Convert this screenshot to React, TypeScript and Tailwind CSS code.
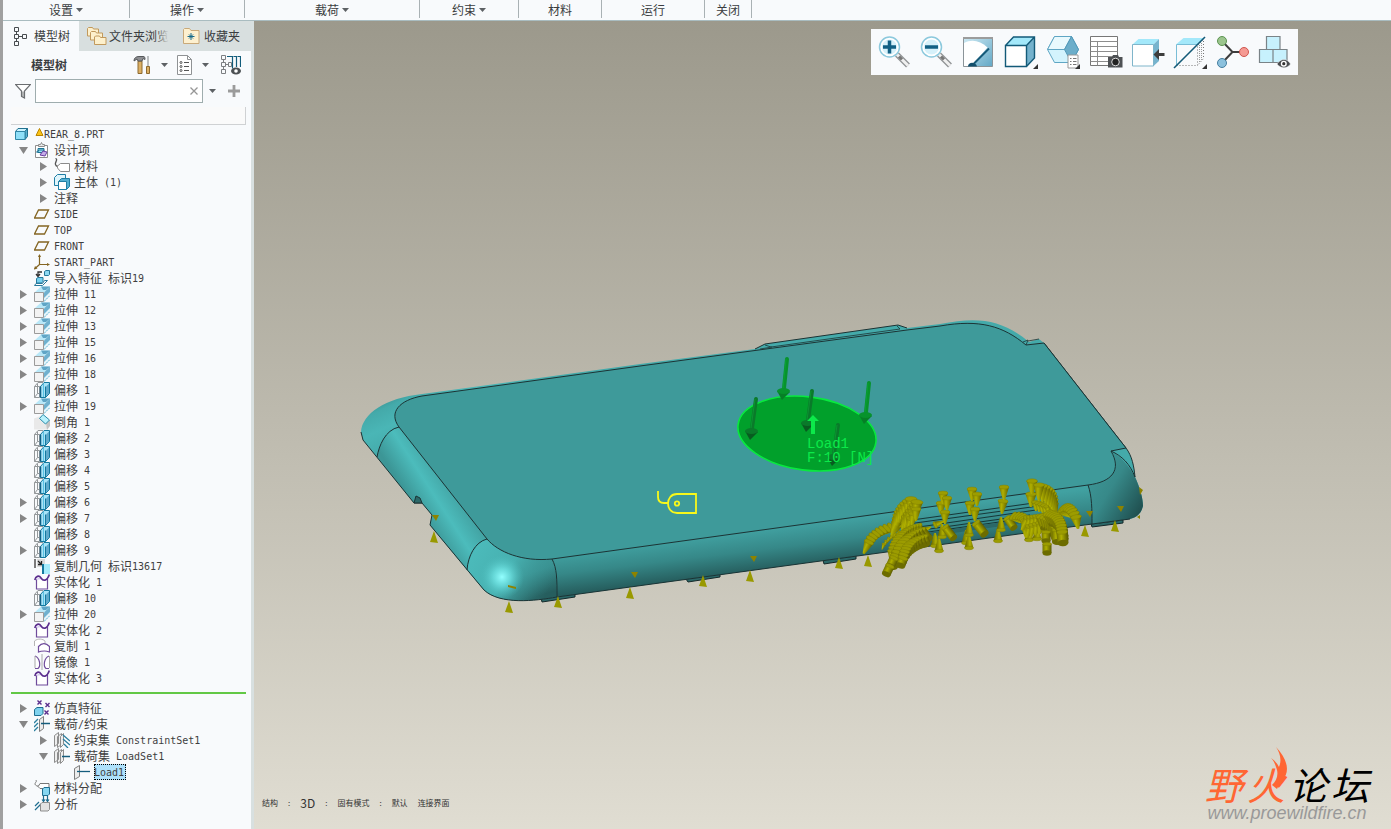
import * as React from 'react';

interface IMenuItem {
  name: string;
  width: string;
  dropdown?: boolean;
}

interface ITreeNode {
  name: string;
  level: number;
  icon?: keyof typeof icons;
  state?: 'open' | 'closed';
  selected?: boolean;
}

const menu: IMenuItem[] = [
  { name: '设置', width: 'w-[127px]', dropdown: true },
  { name: '操作', width: 'w-[115px]', dropdown: true },
  { name: '载荷', width: 'w-[175px]', dropdown: true },
  { name: '约束', width: 'w-[99px]', dropdown: true },
  { name: '材料', width: 'w-[83px]' },
  { name: '运行', width: 'w-[103px]' },
  { name: '关闭', width: 'w-[47px]' },
];

const OffsetIcon = () => (
  <>
    <path d="M.5 4.500h5v11h-5zM.5 4.500l3.500-4h5M3.500 1.500v10h3M.5 15.500l3-4" fill="none" stroke="#94989a" />
    <path d="M6.500 4.500 10 .5h5.500v11l-4 4h-5z" fill="#a9e4f7" stroke="#14799f" />
    <path d="M12 4.500l3-3v10l-3 3z" fill="#5fa9cb" />
    <path d="M6.500 4.500v11" stroke="#0e5f85" strokeWidth="1.500" />
    <path d="M9.500 2v13" stroke="#58bfe3" />
    <path d="M11.500 4.500v11" stroke="#14799f" />
  </>
);

const ExtrudeIcon = () => (
  <>
    <path d="M.5 6.500 7 .5h9l-6 6z" fill="#b9e8f8" />
    <path d="M10 6.500 16 .5v9l-6 6z" fill="#6fb1cf" />
    <path d="M7 .5h9L12 4H9z" fill="#5fa5c6" />
    <path d="M10 15.500V12l6-6v3.500z" fill="#e3f5fb" />
    <path d="M10 15.500l6-6" stroke="#6bbdd8" strokeDasharray="2 1" />
    <path d="M.5 6.500h9v9h-9z" fill="#f3f3f3" stroke="#9b9b9b" />
  </>
);

const DatumIcon = () => <path d="M4.500 4h10l-4 8h-10z" fill="none" stroke="#846522" strokeWidth="1.300" />;

const SolidifyIcon = () => (
  <>
    <path d="M2.500 5v10h11V5" fill="#fff" stroke="#6f4b9b" strokeWidth="1.200" />
    <path d="M2 6c3-4 5-2 6 0s5 1 6-5v4H8z" fill="#d9cfee" />
    <path d="M.8 6C1.500 2 5 1 7 4s6 4 8.300-3.500" fill="none" stroke="#5b2d8d" strokeWidth="1.700" />
  </>
);

const TagIcon = () => (
  <>
    <path d="M1.500.5c3 1-1 4 0 6 .5 1.500 2 2 3.500 1.500" fill="none" stroke="#555" strokeWidth="1.300" />
    <path d="M6.500 5.500h9v8h-9L3.500 10V8z" fill="#fff" stroke="#8b8b8b" />
  </>
);

const PlateIcon = () => <path d="M5.500 3.500 9.500.5v12l-4 3z" fill="#ececec" stroke="#7d7d7d" />;

const icons = {
  part: () => (
    <>
      <path d="M1.500 5.500 4 2.500h9.500L11 5.500z" fill="#c9f3ff" stroke="#22718f" />
      <path d="M11 5.500l2.500-3v8l-2.500 3z" fill="#57b0d1" stroke="#22718f" />
      <path d="M1.500 5.500H11v8H1.500z" fill="#8fdff8" stroke="#2f86a6" />
    </>
  ),
  design: () => (
    <>
      <path d="M1.500 3.500h12v12h-12z" fill="#fff" stroke="#8d8d8d" />
      <path d="M4.500 4.500v-2h2l1-2 1 2h2v2z" fill="#e9e9e9" stroke="#8d8d8d" />
      <path d="M4 6.500h6v4H4zM2.500 10 5 8h5l-2 3z" fill="#9ce1f7" stroke="#1c7393" />
      <path d="M6 13l3-4 4 1-2 4z" fill="#c6aee9" stroke="#6b40a3" />
    </>
  ),
  tag: TagIcon,
  body: () => (
    <>
      <path d="M.5 3.500 3.500.5h8v8l-3 3h-8z" fill="#dff5fc" stroke="#1f7ea5" />
      <path d="M4.500 7.500 7.500 4.500h8v8l-3 3h-8z" fill="#52afd1" stroke="#1f7ea5" />
      <path d="M4.500 7.500h8v8h-8z" fill="#fff" stroke="#1f7ea5" />
    </>
  ),
  datum: DatumIcon,
  csys: () => (
    <>
      <path d="M5.500 10.500V1M5.500 10.500H15M5.500 10.500l-5 4.500" fill="none" stroke="#846522" strokeWidth="1.200" />
      <path d="M5.500 0 4 3h3zM16 10.500l-3-1.500v3zM0 15.500l1-3.500L3.500 14.500z" fill="#846522" />
    </>
  ),
  imported: () => (
    <>
      <path d="M4 5V2h4M2 4l2 2.500L6 4" fill="none" stroke="#333" strokeWidth="1.300" />
      <path d="M10.500 1.500 12 .5h3.500v4l-1 1h-4z" fill="#8fd9f2" stroke="#28789b" />
      <path d="M.5 15.500h8l5-5h-3l-2 3H2z" fill="#fff" stroke="#28789b" />
      <path d="M2.500 8.500 4 7.500h5v4l-1.500 1.500h-5z" fill="#75cfee" stroke="#28789b" />
    </>
  ),
  extrude: ExtrudeIcon,
  offset: OffsetIcon,
  chamfer: () => (
    <>
      <path d="M0 4.500l5-2h5l6 5-3 8H0z" fill="#e9e9e9" />
      <path d="M12 9l4-3v6l-3 4z" fill="#c4c4c4" />
      <path d="M5.500 4.500 9 .5l6.500 5.500-4 4z" fill="#b9f2fd" stroke="#2b8cab" />
    </>
  ),
  copyGeometry: () => (
    <>
      <path d="M3 1h8v8H3z" fill="#dadada" />
      <path d="M1 1v9" stroke="#7b7b7b" strokeWidth="2" />
      <path d="M4 3l3 3M7.500 3v3.500H4" fill="none" stroke="#222" strokeWidth="1.300" />
      <path d="M9 6h7v10H9z" fill="#a6ecfc" />
      <path d="M8 6h2v10H8z" fill="#14799f" />
    </>
  ),
  solidify: SolidifyIcon,
  copy: () => (
    <>
      <path d="M.5 8V3C4 0 9 1 11 3v3" fill="#fff" stroke="#b5b5b5" />
      <path d="M4.500 8.500C8 4.500 12 5 15.500 8.500v5.500c-3-1-3-1-5-1s-4 0-6 1z" fill="#fff" stroke="#6f4b9b" strokeWidth="1.200" />
    </>
  ),
  mirror: () => (
    <>
      <path d="M1 2c5 2 6 10 3 12.500H1" fill="#fff" stroke="#6f4b9b" strokeWidth="1.200" />
      <path d="M15 2c-5 2-6 10-3 12.500h3" fill="#fff" stroke="#6f4b9b" strokeWidth="1.200" />
      <path d="M8 0v16M1 2v12M15.500 2v12" stroke="#a9a9a9" />
    </>
  ),
  simulation: () => (
    <>
      <path d="M.5 9.500 3 7.500h6v6l-2 2H.5z" fill="#7fd2ee" stroke="#1f6e90" />
      <path d="M3.500.5l4 4M7.500.5l-4 4M11.500 3l4 4M15.500 3l-4 4M10.500 10.500l4 4M14.500 10.500l-4 4" stroke="#5b2d8d" strokeWidth="1.400" />
    </>
  ),
  loads: () => (
    <>
      <path d="M0 7l4-4M0 11l4-4M0 15l4-4" stroke="#2b7f9f" strokeWidth="1.300" />
      <PlateIcon />
      <path d="M7 7.500h9" stroke="#155d7d" strokeWidth="1.500" />
    </>
  ),
  constraintSet: () => (
    <>
      <path d="M.5 3.500 4.500.5v11l-4 3zM3.500 4.500 7.500 1.500v11l-4 3z" fill="#eee" stroke="#8d8d8d" />
      <path d="M6.500 4.500l3-3v11l-3 3z" fill="#eee" stroke="#8d8d8d" />
      <path d="M9 3l7 6M9 7l7 6M10 12l4 4" stroke="#2b7f9f" strokeWidth="1.300" />
    </>
  ),
  loadSet: () => (
    <>
      <path d="M.5 3.500 4.500.5v11l-4 3zM3.500 4.500 7.500 1.500v11l-4 3z" fill="#eee" stroke="#8d8d8d" />
      <path d="M6.500 4.500l3-3v11l-3 3z" fill="#eee" stroke="#8d8d8d" />
      <path d="M8 8.500h8" stroke="#155d7d" strokeWidth="1.500" />
    </>
  ),
  load: () => (
    <>
      <path d="M.5 4.500 5.500 1.500v11l-5 3z" fill="#ececec" stroke="#7d7d7d" />
      <path d="M3 7.500h13" stroke="#155d7d" strokeWidth="1.300" />
    </>
  ),
  assign: () => (
    <>
      <path d="M1.500 0c3 1-2 3 0 5 1 1 2 1 3 1L6 3.500h9v5H6L3.500 6" fill="#fff" stroke="#777" />
      <path d="M8.500 9l1.500-1.500h5.500v6.500L14 15.500H8.500z" fill="#86d6f1" stroke="#1f6e90" />
    </>
  ),
  analysis: () => (
    <>
      <path d="M1 10l4-4M1 14l6-6M9.500 0v5M13.500 0v5M8 3.500l1.500 2 1.500-2M12 3.500l1.500 2 1.500-2" fill="none" stroke="#1f6e90" strokeWidth="1.200" />
      <path d="M6.500 8 8 6.500h7.500v7L14 15H6.500z" fill="#e2e2e2" stroke="#8d8d8d" />
    </>
  ),
};

const features: ITreeNode[] = [
  { name: '设计项', level: 1, icon: 'design', state: 'open' },
  { name: '材料', level: 2, icon: 'tag', state: 'closed' },
  { name: '主体 (1)', level: 2, icon: 'body', state: 'closed' },
  { name: '注释', level: 2, state: 'closed' },
  { name: 'SIDE', level: 1, icon: 'datum' },
  { name: 'TOP', level: 1, icon: 'datum' },
  { name: 'FRONT', level: 1, icon: 'datum' },
  { name: 'START_PART', level: 1, icon: 'csys' },
  { name: '导入特征 标识19', level: 1, icon: 'imported' },
  { name: '拉伸 11', level: 1, icon: 'extrude', state: 'closed' },
  { name: '拉伸 12', level: 1, icon: 'extrude', state: 'closed' },
  { name: '拉伸 13', level: 1, icon: 'extrude', state: 'closed' },
  { name: '拉伸 15', level: 1, icon: 'extrude', state: 'closed' },
  { name: '拉伸 16', level: 1, icon: 'extrude', state: 'closed' },
  { name: '拉伸 18', level: 1, icon: 'extrude', state: 'closed' },
  { name: '偏移 1', level: 1, icon: 'offset' },
  { name: '拉伸 19', level: 1, icon: 'extrude', state: 'closed' },
  { name: '倒角 1', level: 1, icon: 'chamfer' },
  { name: '偏移 2', level: 1, icon: 'offset' },
  { name: '偏移 3', level: 1, icon: 'offset' },
  { name: '偏移 4', level: 1, icon: 'offset' },
  { name: '偏移 5', level: 1, icon: 'offset' },
  { name: '偏移 6', level: 1, icon: 'offset', state: 'closed' },
  { name: '偏移 7', level: 1, icon: 'offset', state: 'closed' },
  { name: '偏移 8', level: 1, icon: 'offset' },
  { name: '偏移 9', level: 1, icon: 'offset', state: 'closed' },
  { name: '复制几何 标识13617', level: 1, icon: 'copyGeometry' },
  { name: '实体化 1', level: 1, icon: 'solidify' },
  { name: '偏移 10', level: 1, icon: 'offset' },
  { name: '拉伸 20', level: 1, icon: 'extrude', state: 'closed' },
  { name: '实体化 2', level: 1, icon: 'solidify' },
  { name: '复制 1', level: 1, icon: 'copy' },
  { name: '镜像 1', level: 1, icon: 'mirror' },
  { name: '实体化 3', level: 1, icon: 'solidify' },
];

const simulation: ITreeNode[] = [
  { name: '仿真特征', level: 1, icon: 'simulation', state: 'closed' },
  { name: '载荷/约束', level: 1, icon: 'loads', state: 'open' },
  { name: '约束集 ConstraintSet1', level: 2, icon: 'constraintSet', state: 'closed' },
  { name: '载荷集 LoadSet1', level: 2, icon: 'loadSet', state: 'open' },
  { name: 'Load1', level: 3, icon: 'load', selected: true },
  { name: '材料分配', level: 1, icon: 'assign', state: 'closed' },
  { name: '分析', level: 1, icon: 'analysis', state: 'closed' },
];

const indent: Record<number, string> = { 1: 'pl-0', 2: 'pl-5', 3: 'pl-10' };

const Caret = () => (
  <svg viewBox="0 0 7 4" className="h-1 w-[7px] shrink-0" aria-hidden="true">
    <path d="M0 0h7L3.500 4z" fill="#5d6164" />
  </svg>
);

// Latin runs are set in half-width cells, next to the full-width Chinese ones
const Label: React.FunctionComponent<{ text: string }> = ({ text }) => (
  <>
    {text.split(/([\x20-\x7e]+)/).filter(Boolean).map((run, idx) => (
      <span key={idx} className={/^[\x20-\x7e]/.test(run) ? `pt-0.5 font-['DejaVu_Sans_Mono',monospace] text-[10px]/[14px]` : `text-xs/4`}>
        {run}
      </span>
    ))}
  </>
);

const TreeRow: React.FunctionComponent<{ node: ITreeNode }> = ({ node }) => {
  const Icon = node.icon ? icons[node.icon] : undefined;

  return (
    <li className={`flex h-4 items-center ${indent[node.level]}`}>
      {node.state ? (
        <button type="button" title={node.name} className="flex h-4 w-5 shrink-0 items-center justify-center pr-0.5">
          <svg viewBox="0 0 9 9" className="h-[9px] w-[9px]" aria-hidden="true">
            <path d={node.state === 'open' ? 'M0 1h9L4.500 8z' : 'M1 0v9l7-4.500z'} fill="#868686" />
          </svg>
        </button>
      ) : (
        <span className="w-5 shrink-0" />
      )}
      {Icon && (
        <svg viewBox="0 0 16 16" className="mr-1 h-4 w-4 shrink-0" aria-hidden="true">
          <Icon />
        </svg>
      )}
      <span className={`flex h-4 items-center whitespace-pre ${node.selected ? `bg-[#aee1fb] pr-0.5 outline-1 -outline-offset-1 outline-dotted outline-black` : ``}`}>
        <Label text={node.name} />
      </span>
    </li>
  );
};

const Sidebar = () => (
  <aside className="w-[251px] shrink-0 border-r-[3px] border-[#d8e0e0] bg-[#f8fafc]" aria-label="模型树">
    <div className="flex h-[30px] bg-[#d8dfdf]" role="tablist">
      <button type="button" role="tab" aria-selected="true" className="flex w-[76px] items-center gap-1.5 bg-[#f8fafc] pl-2.5">
        <svg viewBox="0 0 15 20" className="h-5 w-[15px] shrink-0" fill="none" stroke="#474b4e" aria-hidden="true">
          <path d="M1.500 1.500h4v4h-4zM1.500 8.500h4v4h-4zM1.500 15.500h4v4h-4zM9.500 8.500h4v4h-4zM3.500 5.500v3M3.500 12.500v3M5.500 10.500h4" />
        </svg>
        <span className="whitespace-nowrap">模型树</span>
      </button>
      <button type="button" role="tab" aria-selected="false" className="relative flex w-[93px] items-center gap-0.5 pl-2">
        <svg viewBox="0 0 20 20" className="h-5 w-5 shrink-0" fill="#fdf0cc" stroke="#c1995c" aria-hidden="true">
          <path d="M.5 10V2.500l1-1h4l1 1.500h5v7z" />
          <path d="M3.500 14V6.500l1-1h4l1 1.500h6v7z" />
          <path d="M7.500 18.500V11l1-1h4l1 1.500h5.500v7z" />
        </svg>
        <span className="whitespace-nowrap">文件夹浏览</span>
        <span className="absolute inset-y-0 right-0 w-4 bg-linear-to-r from-transparent to-[#d8dfdf] to-80%" />
      </button>
      <button type="button" role="tab" aria-selected="false" className="flex items-center gap-1 pl-2.5">
        <svg viewBox="0 0 18 18" className="h-[18px] w-[18px] shrink-0" aria-hidden="true">
          <path d="M1.500 16.500v-14l1-1h5l1.500 2h8v13z" fill="#fdf0cf" stroke="#c9a979" />
          <path d="M9 6v7M5.500 9.500h7M7 7.500l4 4M11 7.500l-4 4" stroke="#14698b" />
        </svg>
        <span className="whitespace-nowrap">收藏夹</span>
      </button>
    </div>

    <div className="flex h-7 items-center pl-7 pr-2.5">
      <h2 className="flex-1 font-bold">模型树</h2>
      <button type="button" title="工具" className="flex items-center gap-2">
        <svg viewBox="0 0 20 20" className="h-5 w-5" aria-hidden="true">
          <path d="M5 6h4v12.500H5z" fill="#dcb065" stroke="#8d6a30" />
          <path d="M1 6c0-3 2-4.500 5-4.500h4c2 0 2 1 2 3l-2-1-1 2.500H5L4 4z" fill="#8e8f92" stroke="#55575a" />
          <path d="M15 1v10" stroke="#a9abae" strokeWidth="1.500" />
          <path d="M13.500 11.500h3v7h-3z" fill="#dcb065" stroke="#8d6a30" />
        </svg>
        <Caret />
      </button>
      <button type="button" title="显示" className="ml-2 flex items-center gap-2">
        <svg viewBox="0 0 18 20" className="h-5 w-[18px]" fill="none" stroke="#8f9294" aria-hidden="true">
          <path d="M1.500.5h10l4 4v15h-14z" fill="#fff" />
          <path d="M11.500.5v4h4" />
          <circle cx="5" cy="7.500" r="1" stroke="#555" />
          <circle cx="5" cy="11.500" r="1" stroke="#555" />
          <circle cx="5" cy="15.500" r="1" stroke="#555" />
          <path d="M8 7.500h5M8 11.500h5M8 15.500h5" stroke="#555" />
        </svg>
        <Caret />
      </button>
      <button type="button" title="树列" className="ml-3">
        <svg viewBox="0 0 20 20" className="h-5 w-5" fill="none" aria-hidden="true">
          <path d="M.5.5h4v4h-4zM.5 7.500h4v4h-4zM.5 14.500h4v4h-4zM2.500 4.500v3M2.500 11.500v3M4.500 9.500h3M7.500 7.500h3v4h-3z" stroke="#7c7f82" />
          <path d="M6 1.500h5.500v12M12.500 1.500h3V12M16.500 1.500h3V12" stroke="#125c7b" strokeWidth="1.200" />
          <ellipse cx="15" cy="16" rx="5" ry="3.500" fill="#4c5053" />
          <circle cx="15" cy="16" r="1.800" fill="#fff" />
        </svg>
      </button>
    </div>

    <div className="flex h-6 items-center pl-3 pr-2">
      <label htmlFor="tree-filter" title="过滤" className="mr-1 shrink-0">
        <svg viewBox="0 0 16 16" className="h-4 w-4" aria-hidden="true">
          <path d="M.5 1.500h15L9.500 8v7l-3-1.500V8z" fill="#fff" stroke="#6b6e71" strokeWidth="1.200" />
          <path d="M8 8.500V14" stroke="#6b6e71" />
        </svg>
      </label>
      <span className="relative flex-1">
        <input id="tree-filter" type="text" aria-label="过滤" className="block h-6 w-full border border-[#9fadae] bg-white pl-1 pr-5 outline-none" />
        <button type="button" title="清除" className="absolute inset-y-0 right-1 flex items-center">
          <svg viewBox="0 0 10 10" className="h-2.5 w-2.5" aria-hidden="true">
            <path d="M1.500 1.500l7 7M8.500 1.500l-7 7" stroke="#969696" strokeWidth="1.300" />
          </svg>
        </button>
      </span>
      <button type="button" title="过滤选项" className="ml-1.5">
        <Caret />
      </button>
      <button type="button" title="添加" className="ml-3">
        <svg viewBox="0 0 12 12" className="h-3 w-3" aria-hidden="true">
          <path d="M6 0v12M0 6h12" stroke="#9b9b9b" strokeWidth="2.800" />
        </svg>
      </button>
      <span className="w-[3px]" />
    </div>

    <div className="ml-2 mr-[5px] mt-1 h-[18px] border-b border-r border-[#cfd1d3] bg-[#fafafa]" />

    <ul className="pl-[11px] pt-px text-[#3f3f3f]">
      <li className="flex h-4 items-center">
        <svg viewBox="0 0 16 16" className="mr-1 h-4 w-4 shrink-0" aria-hidden="true">
          {icons.part()}
        </svg>
        <svg viewBox="0 0 10 16" className="h-4 w-2.5 shrink-0" aria-hidden="true">
          <path d="M5.500 2.500 9 9.500H2z" fill="#fbc316" stroke="#b98500" />
        </svg>
        <Label text="REAR_8.PRT" />
      </li>
      {features.map((node) => (
        <TreeRow key={node.name} node={node} />
      ))}
    </ul>
    <div className="my-1.5 ml-2 mr-[5px] h-0.5 bg-[#62c845]" />
    <ul className="pb-4 pl-[11px] text-[#3f3f3f]">
      {simulation.map((node) => (
        <TreeRow key={node.name} node={node} />
      ))}
    </ul>
  </aside>
);

const Corner = () => <path d="M34 29v5h-5z" fill="#333" />;

const Magnifier: React.FunctionComponent<React.PropsWithChildren> = ({ children }) => (
  <>
    <path d="M19 19.500l11 11" stroke="#8f9294" strokeWidth="5.500" />
    <path d="M19 19.500l11 11" stroke="#f0f0f0" strokeWidth="3" />
    <path d="M21 21.500l3 3" stroke="#777" strokeWidth="3" />
    <circle cx="11.500" cy="12" r="10" fill="#fff" stroke="#8cc9dd" strokeWidth="1.500" />
    <circle cx="11.500" cy="12" r="7.500" fill="#d6f1fa" />
    <g stroke="#126084" strokeWidth="3.500">{children}</g>
  </>
);

const tools = [
  { title: '放大', icon: <Magnifier><path d="M5 12h13M11.500 5.500v13" /></Magnifier> },
  { title: '缩小', icon: <Magnifier><path d="M5 12h13" /></Magnifier> },
  {
    title: '重画',
    icon: (
      <>
        <path d="M1.500 2.500h29v29h-29z" fill="url(#repaint)" stroke="#8b9499" />
        <path d="M2 8C9 4 18 5 25.500 12.500L11 29l-2 2H2z" fill="#fff" />
        <path d="M1 3h30" stroke="#9c9c9c" strokeWidth="2" />
        <path d="M27 13.500 12 28.500" stroke="#175a78" strokeWidth="2" />
        <path d="M6 31.500c0-5 8-5 9 0z" fill="#124f6c" />
      </>
    ),
  },
  {
    title: '显示样式',
    icon: (
      <>
        <path d="M1.500 10.500l8-8.500h21l-8 8.500z" fill="#a3e8fa" />
        <path d="M22.500 10.500l8-8.500v21l-8 8.500z" fill="#74b2cd" />
        <path d="M1.500 10.500h21v21h-21z" fill="#fff" />
        <path d="M1.500 10.500h21v21h-21zl8-8.500h21v21l-8 8.500M22.500 10.500l8-8.500" fill="none" stroke="#135a78" strokeWidth="1.400" />
        <Corner />
      </>
    ),
  },
  {
    title: '已保存方向',
    icon: (
      <>
        <path d="M1.500 14.500 8.500 1.500h17l7 13-7 13h-17z" fill="#d3f3fd" stroke="#5fa6c4" />
        <path d="M8.500 1.500h17l-7 13h-17z" fill="#e9f9fd" stroke="#5fa6c4" />
        <path d="M25.500 1.500l7 13-7 13-7-13z" fill="#6caeca" stroke="#5198b8" />
        <path d="M22 20h10v13H22z" fill="#fff" stroke="#999" />
        <path d="M24 23.500h1.500M24 26.500h1.500M24 29.500h1.500M27 23.500h3.500M27 26.500h3.500M27 29.500h3.500" stroke="#777" />
        <Corner />
      </>
    ),
  },
  {
    title: '视图管理器',
    icon: (
      <>
        <path d="M1.500 1.500h27v29h-27z" fill="#fff" stroke="#777" />
        <path d="M1.500 6.500h27M1.500 11.500h27M1.500 16.500h27M1.500 21.500h27M1.500 26.500h27M8.500 6.500v24" stroke="#8d8d8d" />
        <path d="M19 22h4l1-2h5l1 2h3.500v10.500H19z" fill="#4e5154" />
        <circle cx="26.500" cy="27" r="3.800" fill="#222" stroke="#ddd" />
      </>
    ),
  },
  {
    title: '透视图',
    icon: (
      <>
        <path d="M1.500 9.500l6-5.500h20.500l-5.500 5.500z" fill="#a3e8fa" />
        <path d="M22.500 9.500 28 4v22l-5.500 5z" fill="#77b4ce" />
        <path d="M1.500 9.500h21V31h-21z" fill="#fff" stroke="#7fb5ca" />
        <path d="M22.500 19.500 28 14v4h5.500v3H28v4z" fill="#3d3d3d" />
      </>
    ),
  },
  {
    title: '截面',
    icon: (
      <>
        <path d="M3.500 9l7-6H31l-6 6z" fill="#a3e8fa" />
        <path d="M3.500 30V9.500h21" fill="none" stroke="#79bdd6" />
        <path d="M3.500 30.500h21v-20l6-6v19l-6 7" fill="none" stroke="#777" strokeDasharray="1 2" />
        <path d="M26.500 10v18M28.500 8v18" stroke="#999" strokeDasharray="1 1" />
        <path d="M1 33 32 2" stroke="#135a78" strokeWidth="1.600" />
        <Corner />
      </>
    ),
  },
  {
    title: '基准显示过滤器',
    icon: (
      <>
        <path d="M7 6l10.500 11L7 28M17.500 17H29" fill="none" stroke="#3d3d3d" strokeWidth="2" />
        <circle cx="7" cy="6" r="4.500" fill="#9cc58e" stroke="#5c9452" />
        <circle cx="29" cy="17" r="4.500" fill="#f59a93" stroke="#cf564f" />
        <circle cx="7" cy="28" r="4.500" fill="#8cc1dd" stroke="#467fa0" />
      </>
    ),
  },
  {
    title: '模型显示',
    icon: (
      <>
        <path d="M9.500 1.500h13.500v13H9.500zM2.500 14.500h13.500v13H2.500zM16 14.500h14v13H16z" fill="#c7f1fd" stroke="#7a8387" strokeWidth="1.200" />
        <path d="M20 29c4-6 10-6 13.500 0-3.500 5-9.500 5-13.500 0z" fill="#4a4d50" stroke="#f8fafc" strokeWidth=".5" />
        <circle cx="26.800" cy="28.700" r="3" fill="#fff" />
        <circle cx="26.800" cy="28.700" r="1.600" fill="#333" />
      </>
    ),
  },
];

const Toolbar = () => (
  <div className="absolute right-[93px] top-2 flex h-[46px] w-[427px] items-center justify-between bg-[#f8fafc] px-[7px]" role="toolbar">
    {tools.map((tool) => (
      <button key={tool.title} type="button" title={tool.title}>
        <svg viewBox="0 0 34 34" className="h-[34px] w-[34px]" aria-hidden="true">
          <defs>
            <linearGradient id="repaint" x1="0" y1="0" x2="1" y2="1">
              <stop offset="0" stopColor="#cfeaf4" />
              <stop offset="1" stopColor="#63a8c6" />
            </linearGradient>
          </defs>
          {tool.icon}
        </svg>
      </button>
    ))}
  </div>
);

interface IStrand {
  from: [number, number];
  to: [number, number];
  bend?: [number, number];
  count: number;
  angle: [number, number];
  size: [number, number];
  round?: boolean;
}

// Angle 0 points down, positive values turn clockwise
const Cone: React.FunctionComponent<{ x: number; y: number; angle: number; length: number; width: number; round?: boolean }> = ({ x, y, angle, length, width, round }) => {
  const half = width / 2;
  const tip = round ? half : half * 0.2;

  return (
    <g transform={`translate(${x} ${y}) rotate(${angle})`}>
      <path d={`M${-half} 0L${-tip} ${length}H${tip}L${half} 0z`} fill="url(#cone)" />
      {round && <ellipse cx="0" cy={length} rx={half} ry={half * 0.6} fill="#6c6c00" />}
      <ellipse cx="0" cy="0" rx={half} ry={half * 0.4} fill="#9c9c00" stroke="#7c7c00" strokeWidth=".4" />
    </g>
  );
};

const strands: IStrand[] = [
  { from: [896, 526], to: [869, 542], bend: [876, 529], count: 9, angle: [55, 25], size: [13, 10] },
  { from: [908, 529], to: [884, 544], bend: [892, 533], count: 8, angle: [50, 20], size: [6, 4] },
  { from: [897, 524], to: [911, 499], bend: [899, 508], count: 9, angle: [25, 0], size: [13, 12] },
  { from: [907, 518], to: [917, 502], count: 6, angle: [20, 5], size: [14, 12] },
  { from: [911, 519], to: [916, 509], count: 3, angle: [15, 0], size: [12, 10] },
  { from: [941, 503], to: [943, 493], count: 2, angle: [0, 0], size: [11, 10] },
  { from: [945, 512], to: [947, 498], count: 2, angle: [0, 0], size: [12, 10] },
  { from: [970, 503], to: [972, 489], count: 2, angle: [0, 0], size: [12, 10] },
  { from: [975, 509], to: [977, 494], count: 2, angle: [0, 0], size: [12, 10] },
  { from: [1003, 501], to: [1004, 487], count: 2, angle: [5, 0], size: [13, 10] },
  { from: [1031, 494], to: [1032, 481], count: 2, angle: [0, 0], size: [13, 11] },
  { from: [1036, 502], to: [1048, 506], count: 5, angle: [0, -10], size: [9, 9] },
  { from: [1053, 504], to: [1039, 485], bend: [1053, 488], count: 9, angle: [-10, 0], size: [16, 11] },
  { from: [1061, 510], to: [1076, 517], bend: [1068, 502], count: 9, angle: [-55, -10], size: [12, 11] },
  { from: [935, 525], to: [922, 531], count: 2, angle: [-115, -115], size: [10, 7] },
  { from: [918, 526], to: [892, 551], bend: [898, 528], count: 14, angle: [-30, 5], size: [12, 9] },
  { from: [921, 531], to: [896, 556], bend: [902, 534], count: 12, angle: [-40, 20], size: [11, 11], round: true },
  { from: [923, 537], to: [903, 558], bend: [906, 540], count: 11, angle: [-20, 20], size: [8, 10], round: true },
  { from: [894, 558], to: [890, 566], count: 2, angle: [25, 25], size: [9, 9], round: true },
  { from: [945, 527], to: [945, 528], count: 1, angle: [-38, -38], size: [14, 8], round: true },
  { from: [976, 523], to: [976, 524], count: 1, angle: [-38, -38], size: [14, 9], round: true },
  { from: [1007, 518], to: [1007, 519], count: 1, angle: [-35, -35], size: [12, 8], round: true },
  { from: [1013, 516], to: [1026, 528], bend: [1028, 514], count: 9, angle: [-50, 0], size: [10, 10] },
  { from: [1028, 519], to: [1050, 514], count: 8, angle: [30, -10], size: [13, 10] },
  { from: [1030, 527], to: [1044, 522], count: 5, angle: [15, 0], size: [11, 10] },
  { from: [1041, 516], to: [1057, 530], bend: [1053, 518], count: 8, angle: [-20, 0], size: [12, 10], round: true },
  { from: [1048, 513], to: [1062, 532], bend: [1061, 515], count: 11, angle: [-30, -5], size: [11, 11], round: true },
  { from: [1046, 532], to: [1047, 544], count: 2, angle: [0, 0], size: [9, 9], round: true },
];

const Strand: React.FunctionComponent<{ strand: IStrand }> = ({ strand }) => {
  const { from, to, count, angle, size, round } = strand;
  const bend = strand.bend ?? [(from[0] + to[0]) / 2, (from[1] + to[1]) / 2];

  return (
    <>
      {Array.from({ length: count }, (_, idx) => {
        const t = count > 1 ? idx / (count - 1) : 0;
        const at = (axis: 0 | 1) => (1 - t) ** 2 * from[axis] + 2 * t * (1 - t) * bend[axis] + t * t * to[axis];
        return <Cone key={idx} x={at(0)} y={at(1)} angle={angle[0] + (angle[1] - angle[0]) * t} length={size[0]} width={size[1]} round={round} />;
      })}
    </>
  );
};

const supports = [
  [434, 531], [509, 601], [558, 596], [630, 587], [703, 575], [750, 570], [839, 557], [868, 555], [1085, 525], [1115, 520],
];

const pins = [
  [435, 515], [634, 572], [753, 556], [1089, 511], [1120, 506],
];

const standing = [
  [935, 533], [939, 538], [966, 530], [969, 535], [998, 528], [1029, 527], [1037, 526], [969, 522], [942, 524], [1001, 517],
];

const feet = ['M541 598l34-4v3l-33 5z', 'M686 579l34-5v3l-32 5z', 'M823 560l33-4v3l-32 5z', 'M1091 524l32-4v3l-31 4z'];

const arrows: { points: number[]; rod: string; head: string }[] = [
  { points: [787, 359, 783, 400], rod: '#07932c', head: '#067f26' },
  { points: [869, 383, 865, 424], rod: '#07932c', head: '#067f26' },
  { points: [756, 399, 751, 440], rod: '#0a7a2a', head: '#085c20' },
  { points: [812, 391, 807, 432], rod: '#0a7a2a', head: '#085c20' },
  { points: [838, 425, 833, 466], rod: '#0a7a2a', head: '#085c20' },
];

const Model = () => (
  <svg viewBox="254 21 1137 808" className="absolute inset-0 h-full w-full" role="img" aria-label="REAR_8.PRT">
    <defs>
      <linearGradient id="shell" gradientUnits="userSpaceOnUse" x1="370" y1="395" x2="395" y2="450">
        <stop offset="0" stopColor="#2f8080" />
        <stop offset=".3" stopColor="#44aaaa" />
        <stop offset=".6" stopColor="#4ab6b6" />
        <stop offset="1" stopColor="#44aaaa" />
      </linearGradient>
      <linearGradient id="left" gradientUnits="userSpaceOnUse" x1="412" y1="502" x2="446" y2="480">
        <stop offset="0" stopColor="#3c9696" />
        <stop offset=".55" stopColor="#4cbcbc" />
        <stop offset="1" stopColor="#43a5a5" />
      </linearGradient>
      <linearGradient id="front" gradientUnits="userSpaceOnUse" x1="800" y1="524" x2="805" y2="565">
        <stop offset="0" stopColor="#41a1a1" />
        <stop offset=".5" stopColor="#368888" />
        <stop offset="1" stopColor="#265e5e" />
      </linearGradient>
      <linearGradient id="corner" gradientUnits="userSpaceOnUse" x1="505" y1="555" x2="520" y2="602">
        <stop offset="0" stopColor="#41a1a1" />
        <stop offset=".5" stopColor="#3a9292" />
        <stop offset="1" stopColor="#265e5e" />
      </linearGradient>
      <linearGradient id="bend" x1="0" y1=".2" x2="1" y2=".6">
        <stop offset="0" stopColor="#4cbcbc" />
        <stop offset=".5" stopColor="#47b0b0" />
        <stop offset="1" stopColor="#368888" stopOpacity="0" />
      </linearGradient>
      <linearGradient id="right" x1="0" y1="0" x2="1" y2=".8">
        <stop offset="0" stopColor="#3f9c9c" />
        <stop offset=".5" stopColor="#378989" />
        <stop offset="1" stopColor="#1f4e4e" />
      </linearGradient>
      <radialGradient id="shine">
        <stop offset="0" stopColor="#93ffff" />
        <stop offset=".4" stopColor="#6ce0e0" stopOpacity=".8" />
        <stop offset="1" stopColor="#4cbcbc" stopOpacity="0" />
      </radialGradient>
      <linearGradient id="cone">
        <stop offset="0" stopColor="#757500" />
        <stop offset=".4" stopColor="#b0b000" />
        <stop offset="1" stopColor="#5c5c00" />
      </linearGradient>
    </defs>

    {/* feet under the shell */}
    {feet.map((d) => (
      <path key={d} d={d} fill="#2b6868" stroke="#14292a" />
    ))}

    {/* shell */}
    <path
      d="M361 432C362 414 385 398 422 394L640 364 755 349 765 344 898 325 907 328 940 324C980 316 1002 320 1029 342L1039 339 1044 343 1126 448C1132 456 1134 466 1135 477 1140 488 1143 498 1143 506 1141 514 1137 517 1130 519L1092 524 850 557 557 597C535 601 500 605 484 590L430 525 432 515 422 503H414L363 440z"
      fill="url(#shell)"
    />
    <path d="M399 427 487 539C481 545 470 552 467 570L430 525 432 515 422 503H414L377 457C379 446 385 430 399 427z" fill="url(#left)" />
    <path d="M552 559 1088 485C1092 496 1092 510 1092 524L557 597C557 580 556 568 552 559z" fill="url(#front)" />
    <path d="M487 539C498 552 522 562 552 559 557 570 557 590 557 597L556 597C535 601 500 605 484 590L467 570C470 552 480 540 487 539z" fill="url(#corner)" />
    <path d="M487 539C498 552 522 562 552 559 557 570 557 590 557 597L556 597C535 601 500 605 484 590L467 570C470 552 480 540 487 539z" fill="url(#bend)" />
    <path d="M1088 485C1112 482 1122 470 1112 452 1120 456 1128 464 1135 477 1140 488 1143 498 1143 506 1141 514 1137 517 1130 519L1092 524C1092 510 1092 496 1088 485z" fill="url(#right)" />
    <circle cx="502" cy="577" r="22" fill="url(#shine)" />
    <path
      d="M361 432L363 440 414 503H422L432 515 430 525 484 590C500 605 535 601 557 597L850 557 1092 524 1130 519M1044 343 1126 448C1132 456 1134 466 1135 477"
      fill="none"
      stroke="#1c3334"
    />

    {/* back face */}
    <path
      d="M422 396 640 366 907 330 940 326C980 319 1003 326 1026 345L1044 343 1126 448 1111 451C1122 470 1112 482 1088 485L552 559C522 562 498 552 487 539L399 427C388 412 400 400 422 396z"
      fill="#3e9a9a"
      stroke="#1c3334"
    />
    <path d="M755 349 765 344 898 325 907 328" fill="none" stroke="#1c3334" />
    <path d="M765 345l6 2 129-18-3-3M760 349l12-2M1023 342l5-2-2 5M1028 341l11-2" fill="none" stroke="#1c3334" strokeWidth=".8" />
    <path
      d="M399 427C385 430 379 446 377 457M487 539C475 542 468 556 467 570M552 559C557 568 557 580 557 597M1088 485C1092 496 1092 510 1092 524M1111 451C1122 456 1130 464 1135 477"
      fill="none"
      stroke="#1c3334"
    />
    <path d="M414 503l2-7 4 2 2 5z" fill="#2b6868" stroke="#1c3334" />

    {/* slot in the front edge */}
    <path d="M905 521 1048 501M908 524 1046 505M912 528 1050 508M900 536 1056 514M915 531 1030 515" fill="none" stroke="#173738" />
    <path d="M893 546l40-10 90-13 2-4-100 14-28 4z" fill="#2b6868" />

    <ellipse cx="807" cy="433.500" rx="69.500" ry="36.700" transform="rotate(7.400 807 433.500)" fill="#01a02b" stroke="#09e83f" strokeWidth="1.600" />
    {arrows.map(({ points: [x1, y1, x2, y2], rod, head }) => (
      <g key={x1}>
        <path d={`M${x1} ${y1}L${x2 + 1} ${y2 - 12}`} stroke={rod} strokeWidth="4" strokeLinecap="round" />
        <path d={`M${x1 - 1} ${y1}L${x2} ${y2 - 12}`} stroke="#0cb03a" strokeWidth="1" opacity=".5" />
        <path d={`M${x2 - 6} ${y2 - 9}L${x2 - 1} ${y2}L${x2 + 7} ${y2 - 8}z`} fill={head} />
        <ellipse cx={x2 + 0.5} cy={y2 - 9} rx="6.500" ry="3" fill={rod} />
      </g>
    ))}
    <path d="M813 415l6 6h-4v13h-4v-13h-4z" fill="#0ce94a" />
    <g className="font-['Liberation_Mono',monospace] text-sm" fill="#0ce94a" xmlSpace="preserve">
      <text x="807" y="448">Load1</text>
      <text x="807" y="462">F:10 [N]</text>
    </g>

    <g fill="none" stroke="#f8f81a" strokeWidth="1.800">
      <path d="M658 491v6c0 4 2 6 6 6h4M677 494h19v19h-19c-12 0-12-19 0-19z" />
      <circle cx="677" cy="503.500" r="2.200" />
    </g>

    {/* displacement constraints */}
    {supports.map(([x, y]) => (
      <path key={x} d={`M${x} ${y}l4 12-8-1z`} fill="#999900" />
    ))}
    {pins.map(([x, y]) => (
      <path key={x} d={`M${x - 3} ${y}l7 0-3 6z`} fill="#8d8300" />
    ))}
    <path d="M508 585l8 2v2l-8-2zM1139 487l4 3-3 5zM1137 517l3-2v4z" fill="#8d8300" />
    {standing.map(([x, y]) => (
      <Cone key={`${x}-${y}`} x={x} y={y + 13} angle={180} length={13} width={9} />
    ))}
    {strands.map((strand, idx) => (
      <Strand key={idx} strand={strand} />
    ))}
  </svg>
);

const Watermark = () => (
  <div className="absolute bottom-2 right-[22px] flex flex-col items-center text-[#999]">
    <div className="relative flex gap-1 text-[38px]/[42px] italic text-black">
      <span className="text-[#ff6633]">野</span>
      <span className="text-[#ff6633]">火</span>
      <span>论</span>
      <span>坛</span>
      <svg viewBox="0 0 20 44" className="absolute -top-4 left-[63px] h-11 w-5" aria-hidden="true">
        <path d="M8 0c11 12 15 24 6 34-2 3-4 5-5 8l-5-4c5-5 7-11 4-18-1-3-2-6-5-9 3 2 6 5 8 9 3-7 1-14-3-20z" fill="#ff6633" />
      </svg>
    </div>
    <a href="#top" className="font-['Liberation_Sans',sans-serif] text-lg/4 italic">www.proewildfire.cn</a>
  </div>
);

const Viewport = () => (
  <main className="relative min-w-0 flex-1 overflow-hidden bg-linear-to-b from-[#9c998c] to-[#e0ddd2]">
    <Model />
    <Toolbar />
    <p className="absolute bottom-4 left-2 flex items-center gap-2.5 whitespace-nowrap text-[8px]/[20px] text-[#333]">
      <span>结构</span>
      <span>:</span>
      <span className="text-xs/5">3D</span>
      <span>:</span>
      <span>固有模式</span>
      <span>:</span>
      <span>默认</span>
      <span>连接界面</span>
    </p>
    <Watermark />
  </main>
);

export default function App() {
  return (
    <div className="flex min-h-screen flex-col border-l-[3px] border-[#a0a0a0] bg-[#f8fafc] font-['Noto_Sans_CJK_SC',sans-serif] text-xs/4 text-[#3a3d40]">
      <nav className="flex h-[21px] border-b border-[#a9bcc0]" aria-label="Top">
        {menu.map((item) => (
          <button key={item.name} type="button" className={`mb-0.5 flex items-center justify-center gap-[3px] border-r border-[#a9b1b4] pt-0.5 ${item.width}`}>
            {item.name}
            {item.dropdown && <Caret />}
          </button>
        ))}
      </nav>
      <div className="flex flex-1">
        <Sidebar />
        <Viewport />
      </div>
    </div>
  );
}
